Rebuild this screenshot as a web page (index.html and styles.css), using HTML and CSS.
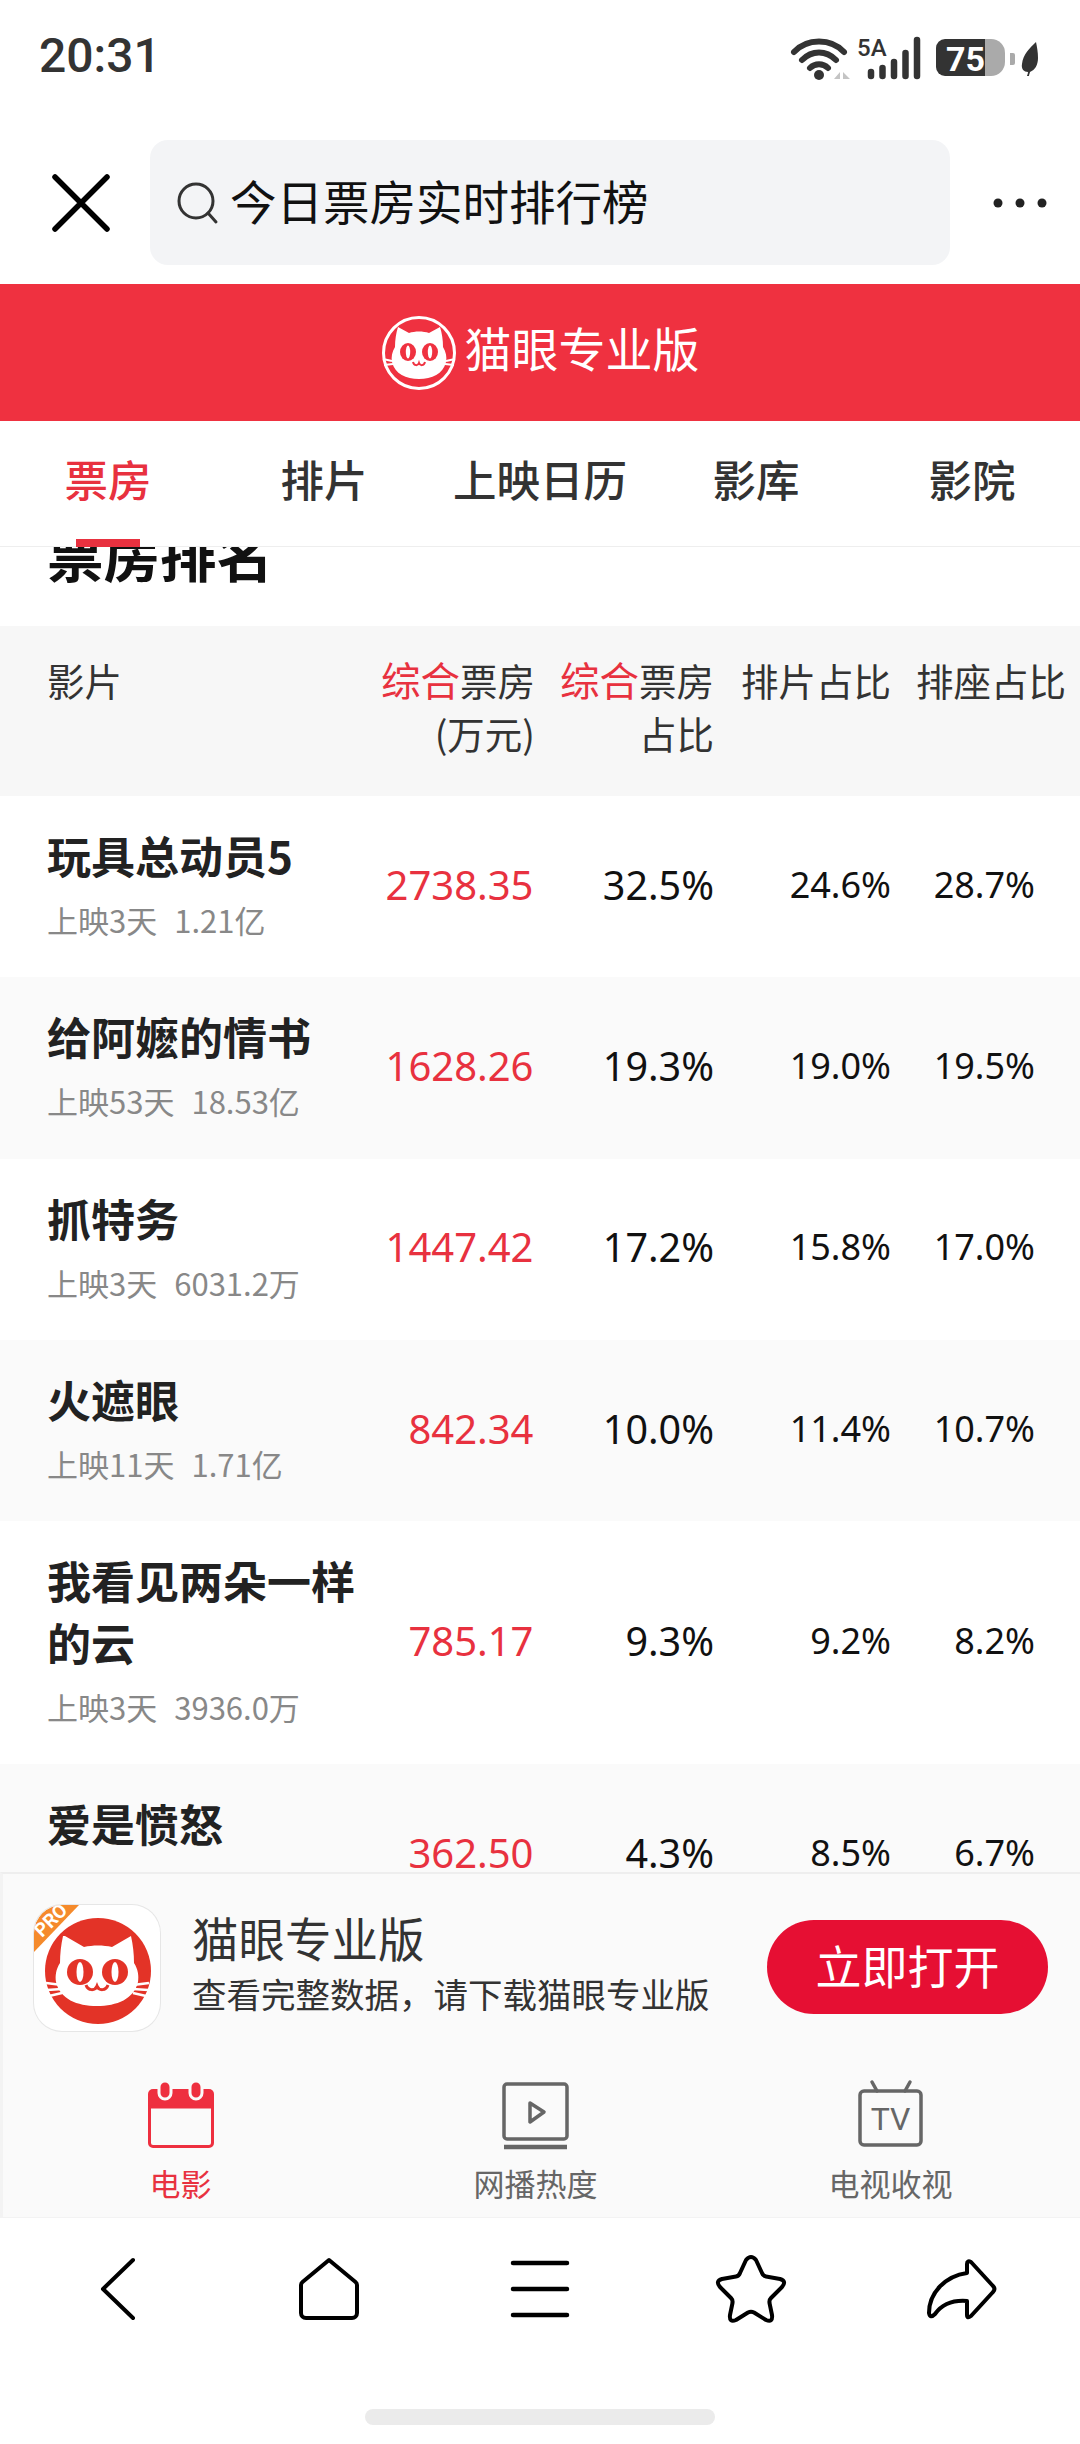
FILE: index.html
```html
<!DOCTYPE html>
<html lang="zh-CN">
<head>
<meta charset="utf-8">
<title>今日票房实时排行榜</title>
<link rel="stylesheet" href="styles.css">
</head>
<body>
<header class="status">
  <span class="clock">20:31</span>
  <svg class="status-icons" width="252" height="44" viewBox="0 0 252 44">
    <g fill="none" stroke="#333" stroke-width="6" stroke-linecap="round">
      <path d="M3 15C16 1 40 1 53 15"/>
      <path d="M11 23C21 13 35 13 45 23"/>
      <path d="M19 31C24 26 32 26 37 31"/>
    </g>
    <circle cx="28" cy="38" r="5" fill="#333"/>
    <path d="M43 42l6-7v7zM52 35l7 7h-7z" fill="#c4c4c4"/>
    <text class="tiny" x="66" y="19">5A</text>
    <g fill="none" stroke="#333" stroke-linecap="round" stroke-width="6.5">
      <path d="M80 35v4"/><path d="M91.500 31v8"/><path d="M103 25v14"/><path d="M114.500 16v23"/><path d="M126 3v36"/>
    </g>
    <path d="M154 2h40v37h-40a9 9 0 0 1-9-9v-19a9 9 0 0 1 9-9z" fill="#333"/>
    <path d="M194 2h6a14 14 0 0 1 14 14v9a14 14 0 0 1-14 14h-6z" fill="#aaa"/>
    <path d="M219 16h3a2 2 0 0 1 2 2v8a2 2 0 0 1-2 2h-3z" fill="#aaa"/>
    <text class="batt" x="155" y="34">75</text>
    <path d="M245 5c-6 6-13 12-14 22-1 5 2 8 6 8 0 2-1 3-1 4l2 0c0-2 1-3 1-4 5-2 8-7 8-14 0-6-1-11-2-16z" fill="#333"/>
  </svg>
</header>

<div class="searchbar">
  <svg class="close" width="58" height="58" viewBox="0 0 58 58"><path d="M3 3L55 55M55 3L3 55" fill="none" stroke="#000" stroke-width="5.500" stroke-linecap="round"/></svg>
  <div class="search">
    <svg width="44" height="44" viewBox="0 0 44 44"><circle cx="21" cy="20" r="17" fill="none" stroke="#333" stroke-width="3"/><path d="M33 32l8 9" stroke="#333" stroke-width="3" stroke-linecap="round"/></svg>
    <span>今日票房实时排行榜</span>
  </div>
  <svg class="more" width="54" height="10" viewBox="0 0 54 10"><circle cx="5" cy="5" r="4.500"/><circle cx="27" cy="5" r="4.500"/><circle cx="49" cy="5" r="4.500"/></svg>
</div>

<div class="brand">
  <svg width="76" height="76" viewBox="0 0 76 76">
    <circle cx="38" cy="38" r="35.500" fill="none" stroke="#fff" stroke-width="3"/>
    <path d="M17 12l11 6c6-2 14-2 20 0l11-6c2 6 3 13 3 20 3 5 4 10 3 15-3 12-14 17-27 17s-24-5-27-17c-1-5 0-10 3-15 0-7 1-14 3-20z" fill="#fff"/>
    <ellipse cx="27" cy="37" rx="8" ry="9" fill="#ef3140"/><ellipse cx="49" cy="37" rx="8" ry="9" fill="#ef3140"/>
    <ellipse cx="27" cy="37" rx="2.200" ry="6.500" fill="#fff"/><ellipse cx="49" cy="37" rx="2.200" ry="6.500" fill="#fff"/>
    <path d="M32 47c1 4 5 4 6 1 1 3 5 3 6-1" fill="none" stroke="#ef3140" stroke-width="2"/>
    <path d="M2 44l9 2M3 50l9-1M74 44l-9 2M73 50l-9-1" fill="none" stroke="#fff" stroke-width="2"/>
  </svg>
  <span class="brand-name">猫眼专业版</span>
</div>

<nav class="tabs">
  <a class="tab is-active">票房</a>
  <a class="tab">排片</a>
  <a class="tab">上映日历</a>
  <a class="tab">影库</a>
  <a class="tab">影院</a>
</nav>

<main class="content">
  <h2 class="section-title">票房排名</h2>
  <div class="thead">
    <div>影片</div>
    <div class="num"><b>综合</b>票房<br>(万元)</div>
    <div class="num"><b>综合</b>票房<br>占比</div>
    <div class="num">排片占比</div>
    <div class="num">排座占比</div>
  </div>

  <div class="row">
    <div class="film"><div class="film-name">玩具总动员5</div><div class="film-sub"><span>上映3天</span><span>1.21亿</span></div></div>
    <div class="val box">2738.35</div><div class="val">32.5%</div><div class="val small">24.6%</div><div class="val small">28.7%</div>
  </div>
  <div class="row">
    <div class="film"><div class="film-name">给阿嬷的情书</div><div class="film-sub"><span>上映53天</span><span>18.53亿</span></div></div>
    <div class="val box">1628.26</div><div class="val">19.3%</div><div class="val small">19.0%</div><div class="val small">19.5%</div>
  </div>
  <div class="row">
    <div class="film"><div class="film-name">抓特务</div><div class="film-sub"><span>上映3天</span><span>6031.2万</span></div></div>
    <div class="val box">1447.42</div><div class="val">17.2%</div><div class="val small">15.8%</div><div class="val small">17.0%</div>
  </div>
  <div class="row">
    <div class="film"><div class="film-name">火遮眼</div><div class="film-sub"><span>上映11天</span><span>1.71亿</span></div></div>
    <div class="val box">842.34</div><div class="val">10.0%</div><div class="val small">11.4%</div><div class="val small">10.7%</div>
  </div>
  <div class="row">
    <div class="film"><div class="film-name">我看见两朵一样的云</div><div class="film-sub"><span>上映3天</span><span>3936.0万</span></div></div>
    <div class="val box">785.17</div><div class="val">9.3%</div><div class="val small">9.2%</div><div class="val small">8.2%</div>
  </div>
  <div class="row">
    <div class="film"><div class="film-name">爱是愤怒</div></div>
    <div class="val box">362.50</div><div class="val">4.3%</div><div class="val small">8.5%</div><div class="val small">6.7%</div>
  </div>
</main>

<section class="promo">
  <div class="promo-top">
    <div class="app-icon">
      <svg width="126" height="126" viewBox="0 0 126 126">
        <circle cx="64" cy="66" r="53" fill="#e33327"/>
        <path d="M31 31l19 11c9-2 19-2 28 0l19-11c2 9 3 18 3 27 4 6 5 13 4 19-4 17-21 24-41 24s-37-7-41-24c-1-6 0-13 4-19 0-9 1-18 3-27z" fill="#fff"/>
        <circle cx="46" cy="67" r="13" fill="#e33327"/><circle cx="81" cy="67" r="13" fill="#e33327"/>
        <ellipse cx="46" cy="67" rx="3.500" ry="10" fill="#fff"/><ellipse cx="81" cy="67" rx="3.500" ry="10" fill="#fff"/>
        <path d="M52 80c2 6 9 6 11 1 2 5 9 5 11-1" fill="none" stroke="#e33327" stroke-width="3"/>
        <path d="M12 78l16 2M13 85l15-1M15 91l13-3M115 78l-16 2M114 85l-15-1M112 91l-13-3" fill="none" stroke="#fff" stroke-width="2.500"/>
        <path d="M0 47V28A28 28 0 0 1 28 0h17z" fill="#f58a2c"/>
        <text class="pro" transform="translate(8 33) rotate(-45)">PRO</text>
      </svg>
    </div>
    <div class="promo-text">
      <div class="promo-name">猫眼专业版</div>
      <div class="promo-desc">查看完整数据，请下载猫眼专业版</div>
    </div>
    <a class="open-btn">立即打开</a>
  </div>
  <div class="promo-nav">
    <a class="pnav is-active">
      <svg width="68" height="68" viewBox="-1 0 68 68">
        <path d="M5 7h56a5 5 0 0 1 5 5v15H0V12a5 5 0 0 1 5-5z" fill="#ee2f3f"/>
        <path d="M1.500 25v36a3.500 3.500 0 0 0 3.500 3.500h56a3.500 3.500 0 0 0 3.500-3.500V25z" fill="#fafafa" stroke="#ee2f3f" stroke-width="3"/>
        <rect x="11" y="-1" width="12" height="18" rx="6" fill="#ee2f3f" stroke="#fafafa" stroke-width="3"/>
        <rect x="42" y="-1" width="12" height="18" rx="6" fill="#ee2f3f" stroke="#fafafa" stroke-width="3"/>
      </svg>
      <span>电影</span>
    </a>
    <a class="pnav">
      <svg width="68" height="68" viewBox="0 0 68 68">
        <rect x="2" y="2" width="63" height="55" rx="3" fill="none" stroke="#666" stroke-width="3.500"/>
        <path d="M28 21l14 9-14 10z" fill="none" stroke="#666" stroke-width="3.500" stroke-linejoin="round"/>
        <path d="M2 65h63" stroke="#666" stroke-width="4.500"/>
      </svg>
      <span>网播热度</span>
    </a>
    <a class="pnav">
      <svg width="68" height="68" viewBox="0 0 68 68">
        <rect x="3" y="9" width="61" height="54" rx="4" fill="none" stroke="#666" stroke-width="3.500"/>
        <path d="M15 0l5 9M53 0l-5 9" fill="none" stroke="#666" stroke-width="3.500" stroke-linecap="round"/>
        <text class="tv" x="33.500" y="48">TV</text>
      </svg>
      <span>电视收视</span>
    </a>
  </div>
</section>

<footer class="browser">
  <div class="browser-icons">
    <svg width="36" height="64" viewBox="0 0 36 64"><path d="M33 3L3 32l30 29" fill="none" stroke="#000" stroke-width="4" stroke-linecap="round" stroke-linejoin="round"/></svg>
    <svg width="62" height="64" viewBox="0 0 62 64"><path d="M31 3L4.500 25a4 4 0 0 0-1.500 3v28a5 5 0 0 0 5 5h46a5 5 0 0 0 5-5V28a4 4 0 0 0-1.500-3z" fill="none" stroke="#000" stroke-width="4" stroke-linejoin="round"/></svg>
    <svg width="58" height="64" viewBox="0 0 58 64"><path d="M2 6h54M2 32h54M2 58h54" fill="none" stroke="#000" stroke-width="4.500" stroke-linecap="round"/></svg>
    <svg width="72" height="70" viewBox="0 0 72 70"><path d="M31 6Q36 0 41 6L47 19Q48 22 51 22.500L65 25Q72 27 67 33L56 44Q54 46 54.500 49L57 61Q58 69 51 66L39 58.500Q36 57 33 58.500L21 66Q14 69 15 61L17.500 49Q18 46 16 44L5 33Q0 27 7 25L21 22.500Q24 22 25 19z" fill="none" stroke="#000" stroke-width="4" stroke-linejoin="round"/></svg>
    <svg width="72" height="64" viewBox="0 0 72 64"><path d="M41 7Q41 3 45 5L67 29Q70 32 67 35L45 59Q41 62 41 58V44C28 43 17 46 9 57Q4 62 3 56C3 35 20 19 41 16z" fill="none" stroke="#000" stroke-width="4" stroke-linejoin="round"/></svg>
  </div>
  <div class="home-bar"></div>
</footer>
</body>
</html>
```

FILE: styles.css
```css
* { box-sizing: border-box; }
html, body { margin: 0; padding: 0; }
body {
  width: 1080px;
  height: 2444px;
  overflow: hidden;
  display: flex;
  flex-direction: column;
  background: #fff;
  color: #222;
  font-family: "Noto Sans CJK SC", "Noto Sans", sans-serif;
}
svg { display: block; flex: none; overflow: visible; }

.status {
  flex: none;
  height: 110px;
  padding: 28px 37px 0 39px;
  display: flex;
  justify-content: space-between;
  align-items: flex-start;
}
.clock { font: 500 48px/56px Roboto, sans-serif; color: #333; }
.status-icons { margin-top: 9px; }
.tiny { font: 500 24px Roboto, sans-serif; fill: #333; }
.batt { font: 700 34px Roboto, sans-serif; fill: #fff; }

.searchbar {
  flex: none;
  height: 174px;
  padding: 30px 33px 19px 52px;
  display: flex;
  align-items: center;
}
.close { margin-right: 40px; }
.search {
  flex: none;
  width: 800px;
  height: 125px;
  background: #f3f4f6;
  border-radius: 18px;
  display: flex;
  align-items: center;
  padding-left: 25px;
  font-size: 46.500px;
  color: #111;
}
.search span { margin: -6px 0 0 11px; }
.more { margin-left: 43px; fill: #222; }

.brand {
  flex: none;
  height: 137px;
  background: #ef3140;
  display: flex;
  align-items: center;
  justify-content: center;
  gap: 8px;
}
.brand-name { font-size: 47px; line-height: 60px; margin-top: -11px; color: #fff; font-weight: 400; }

.tabs {
  flex: none;
  height: 126px;
  border-bottom: 1px solid #eee;
  display: grid;
  grid-template-columns: repeat(5, 216px);
}
.tab {
  position: relative;
  display: flex;
  align-items: center;
  justify-content: center;
  padding-bottom: 11px;
  font-size: 43.500px;
  font-weight: 500;
  color: #333;
}
.tab.is-active { color: #e8313f; }
.tab.is-active::after {
  content: "";
  position: absolute;
  left: 76px;
  bottom: -1px;
  width: 64px;
  height: 8px;
  background: #e8313f;
}

.content { flex: none; height: 1325px; overflow: hidden; }
.section-title {
  margin: -34px 0 0;
  padding-left: 47px;
  height: 113px;
  font-size: 56.500px;
  line-height: 78px;
  font-weight: 700;
  color: #111;
}
.thead, .row {
  display: grid;
  padding-left: 47px;
}
.thead {
  grid-template-columns: 320px 168px 179px 177px 175px;
  height: 170px;
  padding-top: 27px;
  background: #f7f7f7;
  font-size: 37.500px;
  line-height: 53px;
  color: #333;
}
.thead b { font-weight: 400; font-size: 39.500px; line-height: 1; color: #e8313f; }
.num { text-align: right; white-space: nowrap; }

.row {
  grid-template-columns: 320px 168px 179px 177px 144px;
  min-height: 181.300px;
  align-items: center;
}
.row:nth-child(even) { background: #fafafa; }
.film { align-self: start; padding: 28px 0 36.300px; }
.film-name { font-size: 44px; line-height: 62px; font-weight: 700; color: #222; }
.film-sub {
  display: flex;
  gap: 17px;
  margin-top: 13px;
  font-size: 31px;
  line-height: 42px;
  color: #888;
}
.val { text-align: right; margin-top: -4px; font: 400 39.500px/50px "Noto Sans", sans-serif; color: #111; }
.val.small { font-size: 36px; }
.val.box { padding-right: 1.500px; font-size: 40px; color: #e8313f; }

.promo {
  flex: none;
  height: 346px;
  background: #fafafa;
  border-top: 2px solid #eee;
  border-left: 3px solid #f3f3f3;
  border-bottom: 1px solid #f3f3f3;
}
.promo-top {
  height: 176px;
  padding: 31px 32px 0 31px;
  display: flex;
  align-items: flex-start;
}
.app-icon {
  width: 126px;
  height: 126px;
  border-radius: 28px;
  background: #fff;
  box-shadow: 0 0 0 1px #e6e6e6;
  overflow: hidden;
  flex: none;
}
.pro { font: 700 19px Roboto, sans-serif; fill: #fff; }
.promo-text { flex: 1; margin-left: 32px; }
.promo-name { font-size: 46.500px; line-height: 60px; margin-top: 2px; color: #333; }
.promo-desc { font-size: 34.500px; line-height: 48px; margin-top: 2px; color: #333; }
.open-btn {
  flex: none;
  width: 281px;
  height: 94px;
  margin-top: 15px;
  padding-bottom: 7px;
  border-radius: 47px;
  background: #e60f33;
  color: #fff;
  font-size: 46px;
  display: flex;
  align-items: center;
  justify-content: center;
}
.promo-nav {
  display: grid;
  grid-template-columns: repeat(3, 355px);
}
.pnav {
  display: flex;
  flex-direction: column;
  align-items: center;
  padding-top: 32px;
  font-size: 31px;
  line-height: 44px;
  color: #666;
}
.pnav span { margin-top: 11px; }
.pnav.is-active { color: #e8313f; }
.tv { font: 400 32px Roboto, sans-serif; fill: #666; text-anchor: middle; }

.browser { flex: none; height: 226px; }
.browser-icons {
  height: 191px;
  padding-top: 36px;
  display: grid;
  grid-template-columns: repeat(5, 211px);
  grid-template-rows: 70px;
  justify-content: center;
  justify-items: center;
  align-items: center;
}
.home-bar {
  width: 350px;
  height: 16px;
  margin: 0 auto;
  border-radius: 8px;
  background: #ebebeb;
}
```
